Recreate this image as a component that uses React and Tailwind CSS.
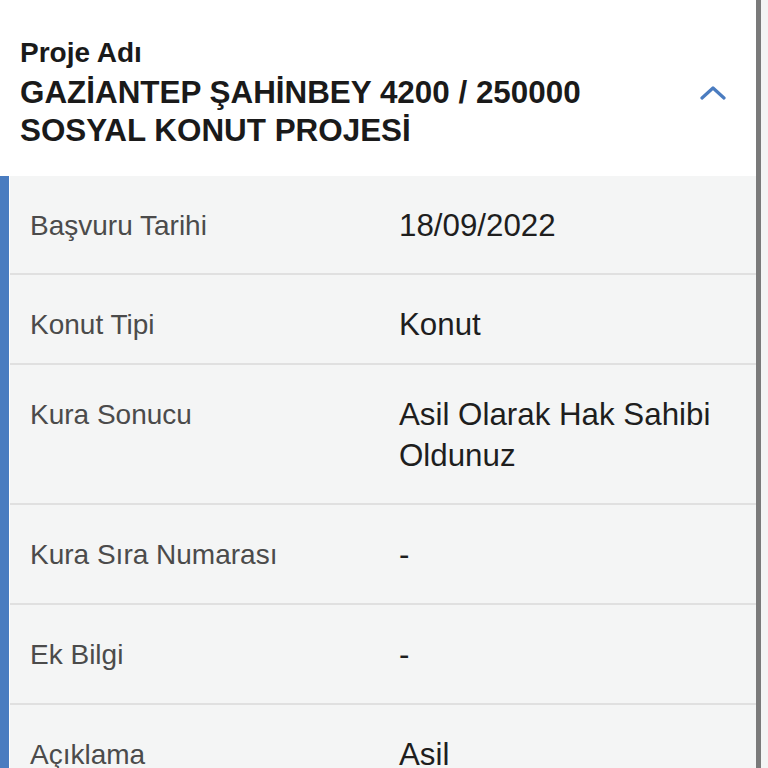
import React from 'react';

const rows = [
  { label: 'Başvuru Tarihi', value: '18/09/2022', h: 'h-[99px]' },
  { label: 'Konut Tipi', value: 'Konut', h: 'h-[90px]' },
  { label: 'Kura Sonucu', value: 'Asil Olarak Hak Sahibi Oldunuz', h: 'h-[140px]' },
  { label: 'Kura Sıra Numarası', value: '-', h: 'h-[100px]' },
  { label: 'Ek Bilgi', value: '-', h: 'h-[100px]' },
  { label: 'Açıklama', value: 'Asil', h: 'h-[100px]' },
];

const ChevronUp = () => (
  <svg width="26" height="16" viewBox="0 0 26 16" fill="none">
    <path d="M2 13 L13 3 L24 13" stroke="#4a7cc0" strokeWidth="3.2" strokeLinecap="round" strokeLinejoin="round" />
  </svg>
);

const App = () => {
  return (
    <div className="h-[768px] w-[768px] overflow-hidden flex bg-[#f4f5f5]" style={{ fontFamily: '"Liberation Sans", Arial, sans-serif' }}>
      <div className="flex-1 flex flex-col min-w-0">
        {/* top strip */}
        <div className="h-[5px] bg-[#ececec]" />
        <div className="h-[2px] bg-[#d9d9d9]" />

        {/* header */}
        <div className="bg-white flex items-center pl-[20px] pr-[30px] pt-[37px] pb-[26px]">
          <div className="flex-1">
            <div className="text-[28px] leading-[32px] font-bold text-[#1a1a1a]">Proje Adı</div>
            <div className="mt-[5px] text-[31.4px] leading-[38px] font-bold text-[#1a1a1a]">
              GAZİANTEP ŞAHİNBEY 4200 / 250000
              <br />
              SOSYAL KONUT PROJESİ
            </div>
          </div>
          <div className="mb-[2px]">
            <ChevronUp />
          </div>
        </div>

        {/* details */}
        <div className="flex flex-1">
          <div className="w-[9px] bg-[#4a7cc0]" />
          <div className="w-[1px] bg-white" />
          <div className="flex-1 flex flex-col">
            {rows.map((row, i) => (
              <div key={i} className={`${row.h} shrink-0 flex items-start pt-[29px] pl-[20px] pr-[20px] border-b-2 border-[#e0e0e0]`}>
                <div className="w-[369px] shrink-0 text-[28px] leading-[41px] text-[#4b4b4b]">{row.label}</div>
                <div className="flex-1 text-[31.3px] leading-[41px] text-[#1e1e1e]">{row.value}</div>
              </div>
            ))}
          </div>
        </div>
      </div>

      {/* right edge */}
      <div className="w-[5px] bg-[#7a7a7a]" />
      <div className="w-[7px] bg-[#f4f4f4]" />
    </div>
  );
};

export default App;
